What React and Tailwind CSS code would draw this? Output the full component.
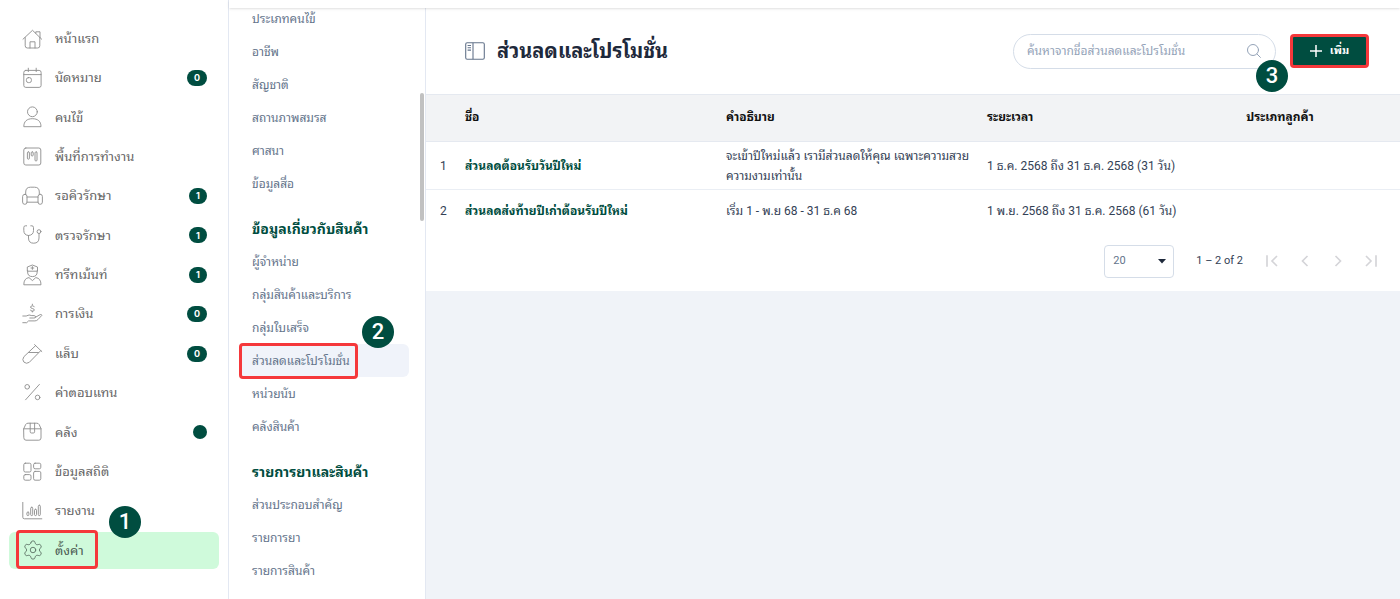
import React from "react";
import { Settings } from "lucide-react";

const Svg = ({ children }) => (
  <svg
    className="size-[22px] shrink-0"
    viewBox="0 0 22 22"
    fill="none"
    stroke="currentColor"
    strokeWidth="0.9"
    strokeLinecap="round"
    strokeLinejoin="round"
    aria-hidden="true"
  >
    {children}
  </svg>
);

const icons = {
  home: (
    <Svg>
      <path d="M1 11.2 10.5 2.3l9.2 8.9M13.8 5.2V3.8H18v5.6M3.2 9.6v8.2q0 2.2 2.2 2.2h10.2q2.2 0 2.2-2.2V9.6" />
      <path d="M8 20v-6.2h5V20" />
    </Svg>
  ),
  calendar: (
    <Svg>
      <rect x="1.8" y="3.4" width="17.3" height="17" rx="2" />
      <path d="M1.8 7.6h17.3M6.3 1.2v3.4M14.2 1.2v3.4" />
      <rect x="4.4" y="10.6" width="5" height="5" rx="2" />
    </Svg>
  ),
  user: (
    <Svg>
      <circle cx="10.4" cy="5.8" r="4.9" />
      <path d="M1.8 20.3c0-5 3.2-7.6 8.6-7.6s8.6 2.6 8.6 7.6z" />
    </Svg>
  ),
  board: (
    <Svg>
      <rect x="1.8" y="2" width="17" height="17" rx="2" />
      <rect x="5.4" y="5.8" width="2" height="7.4" rx="1" />
      <rect x="9.2" y="5.8" width="2" height="4.2" rx="1" />
      <rect x="13" y="5.8" width="2" height="9.2" rx="1" />
    </Svg>
  ),
  sofa: (
    <Svg>
      <path d="M3.7 9.2V7q0-4.8 4.8-4.8h4q4.8 0 4.8 4.8v2.2" />
      <rect x="0.6" y="9.3" width="4.4" height="10" rx="2.2" />
      <rect x="16" y="9.3" width="4.4" height="10" rx="2.2" />
      <path d="M5 12h11M5 17.2h11" />
    </Svg>
  ),
  stethoscope: (
    <Svg>
      <path d="M4.600 1.800H3.400Q1.800 1.800 1.800 3.600V6.500Q1.800 11 6.500 11.500Q11.500 11 11.500 6.500V3.600Q11.500 1.800 9.900 1.800H8.800M6.500 11.500V14Q6.500 19.200 11.700 19.200T17 14V9.500" />
      <circle cx="17" cy="7.6" r="1.9" />
    </Svg>
  ),
  nurse: (
    <Svg>
      <path d="M5.3 6.8V3l5.100-2 5.100 2v3.800zM10.400 2.600v2.800M9 4h2.800M5.600 6.800v1q0 4.800 4.800 4.800t4.800-4.800v-1" />
      <path d="M1.800 20.400c0-4 1.800-6.400 5.200-6.800l3.400 3 3.400-3c3.400.4 5.200 2.800 5.200 6.800z" />
    </Svg>
  ),
  money: (
    <Svg>
      <path d="M12.300 3.800q-.4-1-1.900-1t-1.900 1.200q0 1.200 1.900 1.500t1.900 1.500q0 1.200-1.900 1.200t-1.900-1.100M10.400 2v-.8M10.400 9v-.8" />
      <path d="M.8 13h3.400q3-1.800 5.600-.4h2.400q1.600.4 1.400 1.500-.2 1-1.700.9H7.800M13.600 14.200l4.600-2.600q1.500-.4 1.700.7l-4 4.300q-1.200 1.300-3 1.300H6.600L4.700 19.700H.8" />
    </Svg>
  ),
  tube: (
    <Svg>
      <path d="M12.600 1.600l7.200 7M13.600 2.600 1.900 13.700q-2.200 3 0 5.400 2.500 2.200 5.400.2L18.800 7.600M6.600 9.500h9.800" />
    </Svg>
  ),
  percent: (
    <Svg>
      <circle cx="5.2" cy="4.8" r="2.3" />
      <circle cx="15.6" cy="15.4" r="2.3" />
      <path d="M17.400 2.400 3.600 17.800" />
    </Svg>
  ),
  box: (
    <Svg>
      <path d="M1.800 7.600 3.600 3.600Q4.400 2.200 6 2.200h8.800q1.600 0 2.400 1.400l1.800 4V17q0 2.200-2.200 2.200H4Q1.800 19.200 1.800 17zM1.800 7.800H19M8.200 2.200v8.600q0 1.200 1.200 1.200h2q1.200 0 1.200-1.200V2.200" />
    </Svg>
  ),
  grid: (
    <Svg>
      <rect x="1.8" y="2.2" width="7.2" height="8.8" rx="1.5" />
      <rect x="11.6" y="2.2" width="7.2" height="5.6" rx="1.5" />
      <rect x="1.8" y="13.6" width="7.2" height="5.6" rx="1.5" />
      <rect x="11.6" y="10.4" width="7.2" height="8.8" rx="1.5" />
    </Svg>
  ),
  chart: (
    <Svg>
      <path d="M.8 2.400v14.800q0 1.600 1.600 1.600h17.400" />
      <rect x="4.9" y="12" width="2" height="3.6" rx="1" />
      <rect x="8.7" y="7.2" width="2" height="8.4" rx="1" />
      <rect x="12.5" y="9.2" width="2" height="6.4" rx="1" />
      <rect x="16.3" y="5.2" width="2" height="10.4" rx="1" />
    </Svg>
  ),
  settings: <Settings className="size-[22px] shrink-0" strokeWidth={1} aria-hidden="true" />,
};

const mainNav = [
  { icon: "home", label: "หน้าแรก" },
  { icon: "calendar", label: "นัดหมาย", badge: 0 },
  { icon: "user", label: "คนไข้" },
  { icon: "board", label: "พื้นที่การทำงาน" },
  { icon: "sofa", label: "รอคิวรักษา", badge: 1 },
  { icon: "stethoscope", label: "ตรวจรักษา", badge: 1 },
  { icon: "nurse", label: "ทรีทเม้นท์", badge: 1 },
  { icon: "money", label: "การเงิน", badge: 0 },
  { icon: "tube", label: "แล็บ", badge: 0 },
  { icon: "percent", label: "ค่าตอบแทน" },
  { icon: "box", label: "คลัง", dot: true },
  { icon: "grid", label: "ข้อมูลสถิติ" },
  { icon: "chart", label: "รายงาน" },
  { icon: "settings", label: "ตั้งค่า", active: true },
];

const groups = [
  { items: ["ประเภทคนไข้", "อาชีพ", "สัญชาติ", "สถานภาพสมรส", "ศาสนา", "ข้อมูลสื่อ"] },
  {
    title: "ข้อมูลเกี่ยวกับสินค้า",
    items: ["ผู้จำหน่าย", "กลุ่มสินค้าและบริการ", "กลุ่มใบเสร็จ", "ส่วนลดและโปรโมชั่น", "หน่วยนับ", "คลังสินค้า"],
  },
  { title: "รายการยาและสินค้า", items: ["ส่วนประกอบสำคัญ", "รายการยา", "รายการสินค้า"] },
];

const current = "ส่วนลดและโปรโมชั่น";

const rows = [
  {
    name: "ส่วนลดต้อนรับวันปีใหม่",
    detail: "จะเข้าปีใหม่แล้ว เรามีส่วนลดให้คุณ เฉพาะความสวยความงามเท่านั้น",
    period: "1 ธ.ค. 2568 ถึง 31 ธ.ค. 2568 (31 วัน)",
  },
  {
    name: "ส่วนลดส่งท้ายปีเก่าต้อนรับปีใหม่",
    detail: "เริ่ม 1 - พ.ย 68 - 31 ธ.ค 68",
    period: "1 พ.ย. 2568 ถึง 31 ธ.ค. 2568 (61 วัน)",
  },
];

const stepBase =
  "absolute z-10 flex size-8 items-center justify-center rounded-full bg-[#004d40] text-[22px] font-medium leading-none text-white";

const pagers = [
  { label: "First page", d: "M6 5v14M18 6l-6 6 6 6" },
  { label: "Previous page", d: "M15 6l-6 6 6 6" },
  { label: "Next page", d: "M9 6l6 6-6 6" },
  { label: "Last page", d: "M6 6l6 6-6 6M18 5v14" },
];

function MainNav() {
  return (
    <nav className="flex w-[229px] shrink-0 flex-col justify-between border-r border-[#e3e8f2] px-[9px] pt-5 pb-[30px]">
      {mainNav.map((item) => (
        <a
          key={item.label}
          href="#"
          className={
            item.active
              ? "relative flex h-[37px] items-center gap-[11px] rounded-md bg-[#cffadb] pr-3 pl-[13px] text-[13px] text-[#4b5a52]"
              : "relative flex h-[37px] items-center gap-[11px] rounded-md pr-3 pl-[13px] text-[13px] text-[#666]"
          }
        >
          <span className={item.active ? "text-[#5f7568]" : "text-[#8c8c8c]"}>{icons[item.icon]}</span>
          <span className="flex-1">{item.label}</span>
          {item.badge !== undefined && (
            <span className="flex h-4 items-center justify-center rounded-full bg-[#004d40] px-[7px] font-['Inter',sans-serif] text-[9px] font-bold text-white">
              {item.badge}
            </span>
          )}
          {item.dot && <span className="size-[14px] rounded-full bg-[#004d40]" />}
          {item.active && (
            <>
              <span className="absolute -top-[2px] left-[7px] h-[39px] w-[82px] rounded border-3 border-[#f5383b]" />
              <span className={`${stepBase} -top-[26px] left-[100px]`}>1</span>
            </>
          )}
        </a>
      ))}
    </nav>
  );
}

function SubNav() {
  return (
    <aside className="relative w-[197px] shrink-0 border-r border-[#e3e8f2] pr-4 pl-[11px]">
      <div className="-mt-[6px] flex flex-col gap-3">
        {groups.map((group, i) => (
          <section key={i}>
            {group.title && (
              <h2 className="flex h-[33px] items-center pt-[2px] pl-3 text-[14px] font-bold text-[#004d40]">
                {group.title}
              </h2>
            )}
            <ul>
              {group.items.map((label) => (
                <li key={label} className="relative">
                  <a
                    href="#"
                    className={
                      label === current
                        ? "flex h-[33px] items-center rounded-md bg-[#f0f3fa] pl-3 text-xs text-[#64748b]"
                        : "flex h-[33px] items-center rounded-md pl-3 text-xs text-[#64748b]"
                    }
                  >
                    {label}
                  </a>
                  {label === current && (
                    <>
                      <span className="absolute -top-px -left-px h-[36px] w-[119px] rounded border-3 border-[#f5383b]" />
                      <span className={`${stepBase} -top-[28px] left-[122px]`}>2</span>
                    </>
                  )}
                </li>
              ))}
            </ul>
          </section>
        ))}
      </div>
      <span className="absolute top-[85px] right-px h-32 w-1 rounded-full bg-[#c1c1c1]" />
    </aside>
  );
}

export default function App() {
  return (
    <div className="flex min-h-screen bg-white font-['Roboto','Noto_Sans_Thai_Looped','Loma','Waree','Garuda','Noto_Sans_Thai',sans-serif]">
      <MainNav />
      <div className="flex min-w-0 flex-1 flex-col">
        <div className="relative z-10 h-2 shrink-0 bg-white shadow-sm" />
        <div className="flex min-w-0 flex-1">
          <SubNav />
          <main className="min-w-0 flex-1 bg-[#f0f3f8]">
            <section className="bg-white">
              <header className="flex h-[86px] items-center pr-[31px] pl-[39px]">
                <button type="button" aria-label="Toggle sidebar" className="mr-3 text-[#64748b]">
                  <svg className="h-5 w-5" viewBox="0 0 20 20" fill="none" stroke="currentColor" strokeWidth="1.1">
                    <rect x="0.7" y="1.7" width="18.6" height="16.6" rx="1.5" />
                    <path d="M8 1.700v16.600M2.600 4.500h3.400M2.600 6.800h3.400M2.600 9.100h3.400" />
                  </svg>
                </button>
                <h1 className="flex-1 text-xl font-bold text-[#1e293b]">{current}</h1>
                <div className="relative mr-[14px]">
                  <input
                    type="search"
                    aria-label="ค้นหาจากชื่อส่วนลดและโปรโมชั่น"
                    placeholder="ค้นหาจากชื่อส่วนลดและโปรโมชั่น"
                    className="h-[35px] w-[263px] rounded-full border border-[#d5dde8] bg-white pr-10 pl-[13px] text-xs text-slate-600 outline-none placeholder:text-[#94a3b8]"
                  />
                  <svg
                    className="absolute top-[9px] right-[14px] size-4 text-[#94a3b8]"
                    viewBox="0 0 16 16"
                    fill="none"
                    stroke="currentColor"
                    strokeLinecap="round"
                  >
                    <circle cx="7" cy="7" r="5.5" />
                    <path d="M11 11l3.400 3.400" />
                  </svg>
                  <span className={`${stepBase} top-[26px] right-[-12px]`}>3</span>
                </div>
                <button
                  type="button"
                  className="flex h-[34px] w-[79px] items-center justify-center gap-2 rounded border-3 border-[#f5383b] bg-[#004d40] text-[11px] font-bold text-white"
                >
                  <svg className="size-3" viewBox="0 0 12 12" stroke="currentColor" strokeWidth="1.5" aria-hidden="true">
                    <path d="M6 0v12M0 6h12" />
                  </svg>
                  เพิ่ม
                </button>
              </header>
              <table className="w-full table-fixed text-left text-xs text-[#334155]">
                <colgroup>
                  <col className="w-[39px]" />
                  <col className="w-[26.8%]" />
                  <col className="w-[26.8%]" />
                  <col className="w-[26.6%]" />
                  <col />
                </colgroup>
                <thead>
                  <tr className="h-[47px] border-y border-[#e5e9f0] bg-[#f2f3f5] text-[#111]">
                    <th aria-label="#" />
                    <th className="pb-[2px] font-bold">ชื่อ</th>
                    <th className="pb-[2px] font-bold">คำอธิบาย</th>
                    <th className="pb-[2px] font-bold">ระยะเวลา</th>
                    <th className="pb-[2px] font-bold">ประเภทลูกค้า</th>
                  </tr>
                </thead>
                <tbody>
                  {rows.map((row, i) => (
                    <tr key={row.name} className={i === 0 ? "h-12 border-b border-[#eaeef4]" : "h-[42px]"}>
                      <td className="pl-[14px]">{i + 1}</td>
                      <td>
                        <a href="#" className="font-bold text-[#004d40]">
                          {row.name}
                        </a>
                      </td>
                      <td className="pr-4 leading-5">{row.detail}</td>
                      <td>{row.period}</td>
                      <td />
                    </tr>
                  ))}
                </tbody>
              </table>
              <footer className="flex h-[59px] items-center justify-end pr-[19px] text-[11px] text-[#334155]">
                <div className="relative">
                  <select
                    aria-label="Rows per page"
                    className="h-[33px] w-[70px] appearance-none rounded border border-[#d5dde8] bg-white pl-2 text-[#64748b]"
                  >
                    <option>20</option>
                  </select>
                  <svg
                    className="pointer-events-none absolute top-[14px] right-2 h-[5px] w-2"
                    viewBox="0 0 8 5"
                    fill="#1e293b"
                    aria-hidden="true"
                  >
                    <path d="M0 0h8L4 4.500z" />
                  </svg>
                </div>
                <span className="mr-[19px] ml-[22px]">1 – 2 of 2</span>
                <div className="flex gap-[13px]">
                  {pagers.map((p) => (
                    <button key={p.label} type="button" disabled aria-label={p.label} className="text-[#d4d4d8]">
                      <svg className="size-5" viewBox="0 0 24 24" fill="none" stroke="currentColor" strokeWidth="2">
                        <path d={p.d} />
                      </svg>
                    </button>
                  ))}
                </div>
              </footer>
            </section>
          </main>
        </div>
      </div>
    </div>
  );
}
